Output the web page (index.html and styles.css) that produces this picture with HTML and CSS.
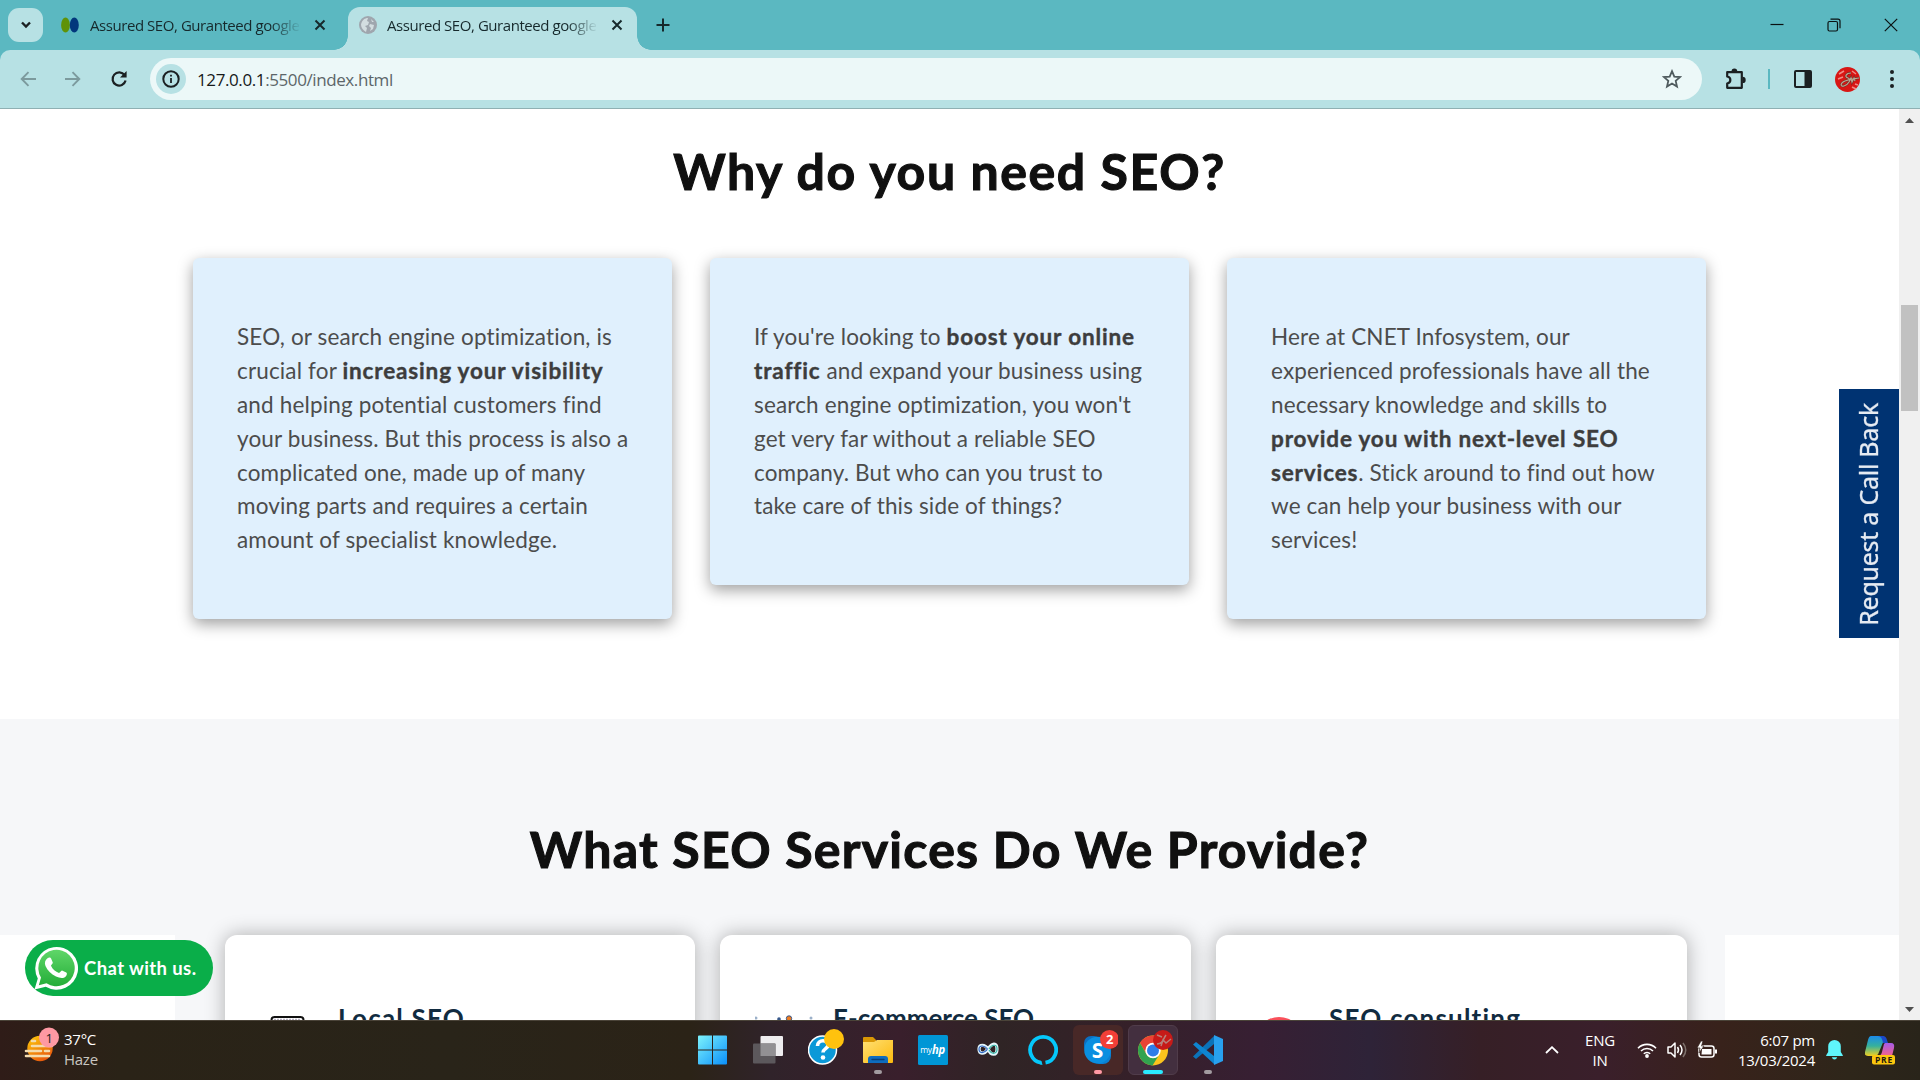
FILE: index.html
```
<!DOCTYPE html>
<html lang="en">
<head>
<meta charset="utf-8">
<title>Assured SEO</title>
<link rel="stylesheet" href="styles.css">
</head>
<body>
<header class="tabstrip">
  <div class="tab-search"><svg width="12" height="8" viewBox="0 0 12 8"><path d="M2 1.5 6 5.5 10 1.5" fill="none" stroke="#1b2022" stroke-width="2.4"/></svg></div>
  <div class="tab">
    <svg width="18" height="16" viewBox="0 0 18 16"><ellipse cx="4.5" cy="8" rx="4.4" ry="7.6" fill="#5f9208"/><ellipse cx="13.3" cy="8" rx="4.5" ry="7.6" fill="#02377c"/></svg>
    <span class="tab-title">Assured SEO, Guranteed google</span>
    <svg class="x" width="12" height="12" viewBox="0 0 12 12"><path d="M1.5 1.5 10.5 10.5M10.5 1.5 1.5 10.5" stroke="#16292c" stroke-width="2"/></svg>
  </div>
  <div class="tab active">
    <svg width="18" height="18" viewBox="0 0 18 18"><circle cx="9" cy="9" r="9" fill="#9fa6ae"/><path d="M2 8.5C3 4 6 2 9 2l-1 3 2 1-1 3-3 1 2 2-1 4C4 14 2 12 2 8.500zM11 8l4 1-1 4-3 2 1-3-2-2zM12 3l3 3-2 0z" fill="#d3dde0"/></svg>
    <span class="tab-title">Assured SEO, Guranteed google</span>
    <svg class="x" width="12" height="12" viewBox="0 0 12 12"><path d="M1.500 1.500 10.500 10.500M10.500 1.500 1.500 10.500" stroke="#16292c" stroke-width="2"/></svg>
  </div>
  <svg class="new-tab" width="14" height="14" viewBox="0 0 14 14"><path d="M7 .5v13M.5 7h13" stroke="#16292c" stroke-width="2"/></svg>
  <div class="window-controls">
    <svg width="14" height="14" viewBox="0 0 14 14"><path d="M.5 6.500h13" stroke="#0a1112" stroke-width="1.200"/></svg>
    <svg width="14" height="14" viewBox="0 0 14 14"><rect x="1" y="3.500" width="9.500" height="9.500" rx="1.500" fill="none" stroke="#0a1112" stroke-width="1.200"/><path d="M3.500 1.200h7.500a2 2 0 0 1 2 2v7" fill="none" stroke="#0a1112" stroke-width="1.200"/></svg>
    <svg width="14" height="14" viewBox="0 0 14 14"><path d="M.8.8 13.200 13.200M13.200.8.8 13.200" stroke="#0a1112" stroke-width="1.200"/></svg>
  </div>
</header>

<nav class="toolbar-wrap"><div class="toolbar">
  <svg class="nav-icon" width="16" height="16" viewBox="0 0 16 16"><path d="M16 8H2M8.500 1.200 1.700 8l6.800 6.800" fill="none" stroke="#7c9a9d" stroke-width="1.900"/></svg>
  <svg class="nav-icon" width="16" height="16" viewBox="0 0 16 16"><path d="M0 8h14M7.500 1.200 14.300 8l-6.800 6.800" fill="none" stroke="#7c9a9d" stroke-width="1.900"/></svg>
  <svg class="nav-icon" width="18" height="18" viewBox="0 0 18 18"><path d="M14.600 5.200A6.600 6.600 0 1 0 15.600 10.600" fill="none" stroke="#1b2022" stroke-width="2.200"/><path d="M16.600 1v6.600H10z" fill="#1b2022"/></svg>
  <div class="omnibox">
    <div class="site-info"><svg width="18" height="18" viewBox="0 0 18 18"><circle cx="9" cy="9" r="7.700" fill="none" stroke="#1b2022" stroke-width="2"/><path d="M9 8v5M9 4.800v1.800" stroke="#1b2022" stroke-width="1.800"/></svg></div>
    <span class="url"><b>127.0.0.1</b>:5500/index.html</span>
    <svg class="star" width="20" height="20" viewBox="0 0 20 20"><path d="M10 2.200 12.300 7.600 18 8.100 13.700 11.900 15 17.600 10 14.600 5 17.600 6.300 11.900 2 8.100 7.700 7.600z" fill="none" stroke="#4f5b5e" stroke-width="1.800"/></svg>
  </div>
  <div class="tools">
    <svg width="22" height="22" viewBox="0 0 22 22"><path d="M2.200 4.200h14.600v15.600H2.200v-4.300c4.200-.8 4.200-6.200 0-7z" fill="none" stroke="#1b2022" stroke-width="2.200" stroke-linejoin="round"/><path d="M6.500 3.500a2.900 2.900 0 0 1 5.800 0zM17.500 8.700a3.200 3.200 0 0 1 0 6.400z" fill="#1b2022"/></svg>
    <i class="divider"></i>
    <svg width="20" height="20" viewBox="0 0 20 20"><rect x="2" y="2" width="16" height="16" rx="1" fill="none" stroke="#1b2022" stroke-width="2"/><path d="M11.500 2H18v16h-6.500z" fill="#1b2022"/></svg>
    <svg class="avatar" width="25" height="25" viewBox="0 0 25 25"><circle cx="12.500" cy="12.500" r="12.500" fill="#d81614"/><path d="M4 7l5-3M3 12l5-2M17 4l4 3M17 20l4 2M20 17l3 1" stroke="#f08a84" stroke-width="1.500"/><path d="M16 6c-5 0-7 4-3 5s0 7-4 8-4-3 1-5 8-2 14-3M14 15l2-4 1 4 2-4 1 3" fill="none" stroke="#7a2a24" stroke-width="2.400"/><path d="M16 6c-5 0-7 4-3 5s0 7-4 8-4-3 1-5 8-2 14-3M14 15l2-4 1 4 2-4 1 3" fill="none" stroke="#b9a792" stroke-width="1.200"/></svg>
    <svg width="6" height="20" viewBox="0 0 6 20"><circle cx="3" cy="3" r="2" fill="#1b2022"/><circle cx="3" cy="10" r="2" fill="#1b2022"/><circle cx="3" cy="17" r="2" fill="#1b2022"/></svg>
  </div>
</div></nav>

<div class="viewport">
  <main class="page">
    <section class="why">
      <h2>Why do you need SEO?</h2>
      <div class="why-cards">
        <p class="why-card">SEO, or search engine optimization, is<br>crucial for <strong>increasing your visibility</strong><br>and helping potential customers find<br>your business. But this process is also a<br>complicated one, made up of many<br>moving parts and requires a certain<br>amount of specialist knowledge.</p>
        <p class="why-card">If you're looking to <strong>boost your online</strong><br><strong>traffic</strong> and expand your business using<br>search engine optimization, you won't<br>get very far without a reliable SEO<br>company. But who can you trust to<br>take care of this side of things?</p>
        <p class="why-card">Here at CNET Infosystem, our<br>experienced professionals have all the<br>necessary knowledge and skills to<br><strong>provide you with next-level SEO</strong><br><strong>services</strong>. Stick around to find out how<br>we can help your business with our<br>services!</p>
      </div>
    </section>
    <section class="services">
      <h2>What SEO Services Do We Provide?</h2>
      <div class="service-row">
        <div class="edge"></div>
        <article class="service">
          <svg width="60" height="20" viewBox="0 0 60 20"><rect x="11.500" y="2" width="32" height="24" rx="3" fill="#fff" stroke="#111" stroke-width="2"/><path d="M14 4.500h27" stroke="#b9b3c4" stroke-width="1.500" stroke-dasharray="2 1"/></svg>
          <h3 class="local">Local SEO</h3>
        </article>
        <article class="service">
          <svg width="60" height="20" viewBox="0 0 60 20"><circle cx="1" cy="3" r="1.500" fill="#9bb0c9"/><circle cx="24" cy="4" r="1.800" fill="#37588a"/><circle cx="34" cy="3.500" r="2.700" fill="#f07c1f" stroke="#37588a"/><circle cx="56" cy="3" r="1.500" fill="#9bb0c9"/></svg>
          <h3 class="shop">E-commerce SEO</h3>
        </article>
        <article class="service">
          <svg width="60" height="20" viewBox="0 0 60 20"><circle cx="28" cy="26" r="24" fill="#f9505a"/></svg>
          <h3 class="consult">SEO consulting</h3>
        </article>
        <div class="edge"></div>
      </div>
    </section>
  </main>
  <div class="callback"><span>Request a Call Back</span></div>
  <div class="scrollbar">
    <svg width="9" height="5" viewBox="0 0 9 5"><path d="M4.500 0 9 5H0z" fill="#505050"/></svg>
    <i class="thumb"></i>
    <svg width="9" height="5" viewBox="0 0 9 5"><path d="M0 0h9L4.500 5z" fill="#505050"/></svg>
  </div>
  <a class="chat">
    <svg width="44" height="44" viewBox="0 0 44 44"><defs><linearGradient id="wa" x2="0" y2="1"><stop offset="0" stop-color="#5fd668"/><stop offset="1" stop-color="#24ad38"/></linearGradient></defs><path d="M.5 43.500 3.800 32.500A21.400 21.400 0 1 1 11.800 40.800z" fill="#fff"/><path d="M4.800 39.200 7 31.500A18.200 18.200 0 1 1 12.500 37.200z" fill="url(#wa)"/><path d="M13.500 12.200c1.500-1.200 3.200-.8 3.700.5l1.600 3.800c.3.800-1.800 2.500-1.800 3.200 1.500 3.500 4.500 6 8 7.300.9-.1 2.200-2.700 3-2.500l4.300 2c1.200.6.500 3-.6 4-2.500 2.300-6 1.600-9.700 0-5-2.200-8.500-6-10.500-10.500-1.300-3.200-.3-6 2-7.800z" fill="#fff"/></svg>
    <span>Chat with us.</span>
  </a>
</div>

<footer class="taskbar">
  <div class="weather">
    <svg width="36" height="36" viewBox="0 0 36 36"><defs><linearGradient id="sun" x2=".6" y2="1"><stop offset="0" stop-color="#ffcf0a"/><stop offset="1" stop-color="#e8590c"/></linearGradient></defs><circle cx="16" cy="21.500" r="12.700" fill="url(#sun)"/><path d="M8 14h3M8 19h20M2 24h15M21 24h4M2 29h23" stroke="#f4dcae" stroke-width="2.600" stroke-linecap="round"/><circle cx="25" cy="10.500" r="10" fill="#fe99a3"/><text x="25" y="15.500" font-size="13" text-anchor="middle" fill="#222">1</text></svg>
    <div>37°C<br><span>Haze</span></div>
  </div>
  <div class="apps">
    <div class="app"><svg width="30" height="30" viewBox="0 0 30 30"><defs><linearGradient id="win" x2="1" y2="1"><stop offset="0" stop-color="#7df3fc"/><stop offset="1" stop-color="#0a8ffa"/></linearGradient></defs><path d="M0 1.500Q0 .5 1 .5h13v14H0zM15 .5h13q1 0 1 1v13H15zM0 15.500h14v14H1q-1 0-1-1zM15 15.500h14v13q0 1-1 1H15z" fill="url(#win)"/></svg></div>
    <div class="app"><svg width="30" height="30" viewBox="0 0 30 30"><rect x="7.500" y="1" width="22.500" height="20" rx="1" fill="#eeedef"/><rect y="8.500" width="22.500" height="20" rx="1" fill="#5c585c"/><path d="M7.500 8.500h15V21h-15z" fill="#929093"/></svg></div>
    <div class="app"><svg width="36" height="36" viewBox="0 0 36 36"><circle cx="14.500" cy="21" r="14" fill="#0b99d8" stroke="#fff" stroke-width="1.500"/><path d="M9.500 17c0-7 11-7 10.500-.500-.2 3-5 3.500-5 7" fill="none" stroke="#fff" stroke-width="3.600"/><circle cx="15" cy="28.500" r="2.300" fill="#fff"/><circle cx="26" cy="10" r="10" fill="#ffc20e"/></svg></div>
    <div class="app"><svg width="30" height="30" viewBox="0 0 30 30"><defs><linearGradient id="fold" x2="1" y2="1"><stop offset="0" stop-color="#ffe073"/><stop offset="1" stop-color="#fcb90e"/></linearGradient></defs><path d="M0 3q0-1 1-1h9l3 3v5H0z" fill="#d99705"/><path d="M0 7h11l3-2h16v22q0 1-1 1H1q-1 0-1-1z" fill="url(#fold)"/><path d="M5 28v-4q0-3 3-3h14q3 0 3 3v4z" fill="#0e6cbe"/><path d="M9 24.500h12" stroke="#063f78" stroke-width="1.300" stroke-linecap="round"/></svg><i class="dot"></i></div>
    <div class="app"><svg width="30" height="30" viewBox="0 0 30 30"><rect width="30" height="30" rx="1.500" fill="#0096d6"/><text x="2.200" y="17.500" font-size="8.500" fill="#fff">my</text><text x="14" y="18.500" font-size="12.500" font-weight="700" font-style="italic" fill="#fff" textLength="13" lengthAdjust="spacingAndGlyphs">hp</text></svg></div>
    <div class="app"><svg width="22" height="18" viewBox="0 0 22 18"><path d="M11 8C8 3 2 3 2 8s5 6 9 0 9-7 9 0-6 7-9 0z" fill="none" stroke="#e4f6fb" stroke-width="3.200"/><path d="M10.500 8C8 4.500 2 3.500 2 8s5 5 8.500 0" fill="none" stroke="#2e67c5" stroke-width="1.200"/><path d="M12 8c3-5 8-5 8 0s-5 6-8 1" fill="none" stroke="#39b8a8" stroke-width="1.200"/></svg></div>
    <div class="app"><svg width="30" height="30" viewBox="0 0 30 30"><path d="M12.800 27.700A13 13 0 1 1 17.500 27.700" fill="none" stroke="#05c8fb" stroke-width="3.800"/><path d="M12 26v3.500l2.500.5-1-4z" fill="#05c8fb"/></svg></div>
    <div class="app alert"><svg width="40" height="40" viewBox="0 0 40 40"><rect x="6" y="6" width="17" height="17" rx="7" fill="#0c6fc0"/><rect x="13" y="14" width="20" height="20" rx="8" fill="#0a80d2"/><circle cx="19.500" cy="20" r="13.300" fill="#0a8fe0"/><text x="19.500" y="27.500" text-anchor="middle" font-size="21" font-weight="700" fill="#fff">S</text><circle cx="31.500" cy="9.500" r="9.500" fill="#f23f37"/><text x="31.500" y="14.200" text-anchor="middle" font-size="13" font-weight="700" fill="#fff">2</text></svg><i class="dot pink"></i></div>
    <div class="app current"><svg width="40" height="40" viewBox="0 0 40 40"><circle cx="20" cy="20.500" r="15" fill="#fcc31d"/><path d="M7 13A15 15 0 0 1 33 13L20 13.500A7.500 7.500 0 0 0 13.500 24z" fill="#ea4335"/><path d="M7 13A15 15 0 0 0 19.500 35.500L26.500 24.200A7.500 7.500 0 0 1 13.500 24.200z" fill="#31a350"/><circle cx="20" cy="20.500" r="7.700" fill="#fff"/><circle cx="20" cy="20.500" r="6" fill="#2f7de9"/><circle cx="30" cy="10" r="10" fill="#c61a18"/><path d="M24 14c6 0 6-5 9-9M28 16l2-6 3 3 5-4M24 5l5 2" fill="none" stroke="#b78079" stroke-width="1.500"/></svg><i class="dot cyan"></i></div>
    <div class="app"><svg width="30" height="30" viewBox="0 0 30 30"><path d="M0 21.500 21 1v8L3 24z" fill="#0b73b9"/><path d="M0 9.500 3 7l18 14v8z" fill="#0e85d0"/><path d="M21 0 30 4v22l-9 4z" fill="#28a0ee"/></svg><i class="dot"></i></div>
  </div>
  <div class="tray">
    <svg width="14" height="8" viewBox="0 0 14 8"><path d="M1 7 7 1.200 13 7" fill="none" stroke="#fff" stroke-width="1.800"/></svg>
    <div class="lang">ENG<br>IN</div>
    <svg class="wifi" width="20" height="16" viewBox="0 0 20 16"><path d="M1 6.200a12.500 12.500 0 0 1 18 0M4 9a8.500 8.500 0 0 1 12 0M6.800 11.800a4.500 4.500 0 0 1 6.400 0" fill="none" stroke="#fff" stroke-width="1.600"/><circle cx="10" cy="14" r="1.900" fill="#fff"/></svg>
    <svg class="sound" width="20" height="18" viewBox="0 0 20 18"><path d="M1 6h3l4-4v14l-4-4H1z" fill="none" stroke="#fff" stroke-width="1.500" stroke-linejoin="round"/><path d="M10.500 6q2 3 0 6M13 4q4 5 0 10" fill="none" stroke="#fff" stroke-width="1.500"/><path d="M16 2q5.500 7 0 14" fill="none" stroke="#7d706b" stroke-width="1.500"/></svg>
    <svg class="battery" width="20" height="18" viewBox="0 0 20 18"><rect x="2" y="5" width="15" height="11" rx="2.500" fill="none" stroke="#fff" stroke-width="1.500"/><path d="M5 8h9.500v5.500H4.500zM18 8.500h2v4h-2z" fill="#fff"/><path d="M4 0 0 7h3l-1 5 5-7H4.500L6 0z" fill="#fff" stroke="#35221d" stroke-width=".7"/></svg>
    <div class="clock">6:07 pm<br>13/03/2024</div>
    <svg class="bell" width="17" height="20" viewBox="0 0 17 20"><path d="M8.500 0a6.300 6.300 0 0 1 6.300 6.300V12l2 3.200v.8H.2v-.8l2-3.200V6.300A6.300 6.300 0 0 1 8.500 0zM5.800 17.200h5.400q-.8 2.300-2.700 2.300t-2.700-2.300z" fill="#5ff5fb"/></svg>
    <svg class="copilot" width="30" height="30" viewBox="0 0 30 30"><defs><linearGradient id="cp1" x2="0" y2="1"><stop offset="0" stop-color="#1b8bea"/><stop offset=".5" stop-color="#35b19c"/><stop offset="1" stop-color="#f2d020"/></linearGradient><linearGradient id="cp2" x2="0" y2="1"><stop offset="0" stop-color="#a65be9"/><stop offset="1" stop-color="#f2638a"/></linearGradient></defs><path d="M6 1h11q3 0 2 4l-5 12q-1 4-5 4H3q-4 0-3-4L3 5q1-4 3-4z" fill="url(#cp1)"/><path d="M13 1h5q3 0 4 4l1 3h-5q-1-7-5-7z" fill="#1b49c9"/><path d="M20 8h6q4 0 3 5l-2 8H13q3 0 4-4l2-8z" fill="url(#cp2)"/><rect x="7" y="20" width="23" height="9.500" rx="2" fill="#fcc70e"/><text x="18.500" y="27.800" text-anchor="middle" font-size="8.500" font-weight="700" fill="#1d1a10" textLength="17">PRE</text></svg>
  </div>
</footer>
</body>
</html>
```
FILE: styles.css
```
* { box-sizing: border-box; }

body {
  margin: 0;
  width: 1920px;
  height: 1080px;
  overflow: hidden;
  display: grid;
  grid-template-rows: 50px 59px 911px 60px;
  font-family: "Open Sans", "Noto Sans", sans-serif;
  background: #fff;
}

svg { display: block; flex: none; }

/* Browser tabs */
.tabstrip { display: flex; background: #5bb8c1; padding-left: 8px; }
.tab-search {
  width: 35px; height: 34px; margin-top: 8px; border-radius: 11px;
  background: #b7e1e4; display: grid; place-items: center;
}
.tab { display: flex; align-items: center; width: 305px; padding: 0 22px 0 18px; }
.tab-title {
  margin-left: 11px; width: 209px; overflow: hidden; white-space: nowrap;
  font-size: 15px; letter-spacing: -0.44px; line-height: 24px; color: #16292c;
  -webkit-mask-image: linear-gradient(90deg, #000 86%, transparent 101%);
  mask-image: linear-gradient(90deg, #000 86%, transparent 101%);
}
.tab .x { margin-left: 15px; }
.tab.active {
  position: relative; width: 289px; height: 43px; margin-top: 7px; padding: 0 0 7px 11px;
  background: #b7e1e4; border-radius: 12px 12px 0 0;
}
.tab.active .tab-title { margin-left: 10px; }
.tab.active::before, .tab.active::after {
  content: ""; position: absolute; bottom: 0; width: 14px; height: 14px;
}
.tab.active::before { left: -14px; background: radial-gradient(circle at 0 0, transparent 13.5px, #b7e1e4 14px); }
.tab.active::after { right: -14px; background: radial-gradient(circle at 100% 0, transparent 13.5px, #b7e1e4 14px); }
.new-tab { margin: 18px 0 0 19px; }
.window-controls { margin: 18px 22px 0 auto; display: flex; gap: 43px; }

/* Address bar */
.toolbar-wrap { background: #5bb8c1; }
.toolbar {
  height: 59px; display: flex; align-items: center; padding: 0 25px 0 20px;
  background: #b7e1e4; border-radius: 10px 10px 0 0; border-bottom: 1px solid #8fb0b3;
}
.nav-icon { margin-right: 29px; }
.nav-icon:nth-child(3) { margin-right: 22px; }
.omnibox {
  width: 1552px; height: 42px; border-radius: 21px; background: #ecf8f8;
  display: flex; align-items: center; padding: 0 20px 0 6px;
}
.site-info { width: 30px; height: 30px; border-radius: 50%; background: #b7e1e4; display: grid; place-items: center; }
.url { margin-left: 11px; font-size: 17px; letter-spacing: -0.4px; color: #5c6669; }
.url b { font-weight: 400; color: #16191a; }
.star { margin-left: auto; }
.tools { display: flex; align-items: center; margin-left: 23px; flex: 1; }
.divider { width: 2px; height: 20px; background: #5bb8c1; margin: 0 23px 0 21px; }
.avatar { margin: 0 29px 0 22px; }

/* Web page */
.viewport { position: relative; display: grid; grid-template-columns: 1899px 21px; overflow: hidden; height: 911px; }
.page { height: 911px; overflow: hidden; font-family: Lato, "Open Sans", sans-serif; }
h2, h3, p { margin: 0; }
h2 { font-size: 50px; line-height: 60px; font-weight: 700; text-align: center; color: #101010; -webkit-text-stroke: 1.100px #101010; }
.why { height: 610px; padding-top: 32px; }
.why h2 { letter-spacing: 1.600px; }
.why-cards { display: flex; align-items: flex-start; gap: 38px; padding: 57px 0 0 193px; }
.why-card {
  width: 479px; padding: 62.200px 0 62px 44px; border-radius: 6px; background: #e0f0fd;
  box-shadow: 0 5px 15px rgba(0, 0, 0, .38); white-space: nowrap;
  font-size: 22.500px; line-height: 33.830px; letter-spacing: .150px; color: #4c4c4c;
}
.why-card strong { letter-spacing: .850px; font-weight: 700; color: #3d3d3d; -webkit-text-stroke: .400px #3d3d3d; }
.services { height: 301px; background: #f6f7f9; padding-top: 100px; }
.services h2 { letter-spacing: 1.250px; }
.service-row { display: grid; grid-template-columns: 175px 470px 471px 471px 174px; justify-content: start; margin-top: 56px; }
.service-row .edge { background: #fff; height: 90px; }
.service:nth-child(2) { margin-left: 50px; margin-right: -50px; }
.service:nth-child(3) { margin-left: 75px; margin-right: -75px; }
.service:nth-child(4) { margin-left: 100px; margin-right: -100px; }
.edge:last-child { margin-left: 138px; margin-right: -138px; }
.service {
  height: 180px; border-radius: 12px; background: #fff; padding: 80px 0 0 35px;
  display: flex; align-items: flex-start; box-shadow: 0 0 20px rgba(0, 0, 0, .3);
}
.service h3 { margin: -15px 0 0 18px; font-size: 26px; line-height: 36px; font-weight: 700; color: #112b40; white-space: nowrap; }
.local, .consult { letter-spacing: 1.200px; }
.shop { letter-spacing: 0; }

.callback {
  position: absolute; left: 1839px; top: 280px; width: 60px; height: 249px;
  background: #003372; display: grid; place-items: center;
}
.callback span {
  writing-mode: vertical-rl; transform: rotate(180deg); font-family: "Noto Sans", sans-serif;
  font-size: 25px; letter-spacing: -0.250px; line-height: 34px; color: #e6ebf2; white-space: nowrap; margin: 2px 3px 0 0;
  -webkit-text-stroke: .300px #e6ebf2;
}
.scrollbar { background: #f0f0f0; display: flex; flex-direction: column; align-items: center; padding: 9px 0 8px; }
.thumb { width: 17px; height: 106px; margin: 182px 0 auto; background: #c1c1c1; }
.chat {
  position: absolute; left: 25px; top: 831px; width: 188px; height: 56px; border-radius: 28px;
  background: #0aae49; display: flex; align-items: center; padding-left: 9px;
}
.chat span { margin-left: 6px; font: 700 18.500px/24px Lato, sans-serif; letter-spacing: .400px; color: #fff; white-space: nowrap; }

/* Taskbar */
.taskbar {
  display: grid; grid-template-columns: 685px 1fr auto; border-top: 1px solid #4a4338; color: #fff;
  font-size: 15px; line-height: 20px; letter-spacing: -0.260px;
  background: linear-gradient(90deg, #2f1c18 0, #2a2317 120px, #292419 450px, #2b2317 690px, #30232a 770px, #391f2c 900px, #2f2425 1000px, #352029 1130px, #371f33 1260px, #2e2338 1370px, #361f26 1480px, #3a1f2b 1600px, #38221b 1720px, #2e261a 1850px, #29241a 1920px);
}
.weather { display: flex; padding: 6px 0 0 24px; }
.weather div { margin: 2px 0 0 4px; }
.weather span { color: #c9c6c1; }
.apps { display: flex; }
.app { position: relative; width: 50px; height: 50px; margin: 4px 5px 0 0; border-radius: 6px; display: grid; place-items: center; }
.app:first-child { margin-left: 3px; }
.app:first-child svg { margin-left: -1px; }
.app:nth-child(3) svg { margin: -7px 0 0 6px; }
.alert { background: #482827; }
.current { background: #432f3f; border: 1px solid #503c4a; }
.dot { position: absolute; bottom: 1px; left: 21px; width: 8px; height: 4px; border-radius: 2px; background: #a29ba0; }
.dot.pink { background: #ff99a4; }
.dot.cyan { left: 14px; bottom: 0; width: 20px; background: #2aeaff; }
.tray { display: flex; align-items: center; height: 58px; padding-right: 25px; }
.lang { width: 40px; margin: -1px 17px 0 21px; text-align: center; }
.sound { margin-left: 10px; }
.battery { margin-left: 10px; }
.clock { width: 90px; margin: -1px 0 0 8px; text-align: right; }
.bell { margin-left: 11px; }
.copilot { margin-left: 22px; }
```
